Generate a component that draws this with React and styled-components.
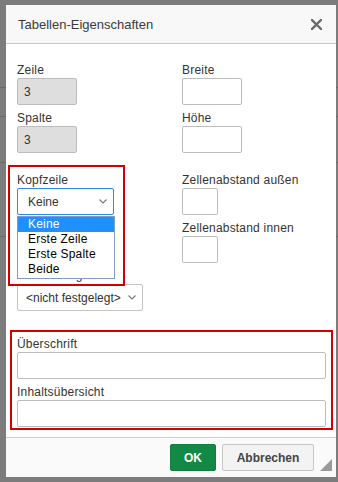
import React from 'react';
import styled, { createGlobalStyle } from 'styled-components';

const GlobalStyle = createGlobalStyle`
  html, body {
    margin: 0;
    padding: 0;
  }
  body {
    font-family: "Liberation Sans", Arial, sans-serif;
    background: #7c7c7c;
  }
  * {
    box-sizing: border-box;
  }
`;

const Chevron = () => (
  <svg width="8" height="5" viewBox="0 0 8 5">
    <polyline points="0.5,0.5 4,4 7.5,0.5" fill="none" stroke="#777" strokeWidth="1.1" />
  </svg>
);

const CloseIcon = () => (
  <svg width="11" height="11" viewBox="0 0 11 11">
    <path d="M1 1 L10 10 M10 1 L1 10" stroke="#6b6b6b" strokeWidth="2.4" strokeLinecap="square" />
  </svg>
);

const App = () => {
  return (
    <>
      <GlobalStyle />
      <Backdrop>
        <Dialog>
          <Header>
            <Title>Tabellen-Eigenschaften</Title>
            <CloseButton><CloseIcon /></CloseButton>
          </Header>

          <Body>
            <FieldGrid>
              <Field>
                <Label>Zeile</Label>
                <Input $w={60} $disabled>3</Input>
              </Field>
              <Field>
                <Label>Breite</Label>
                <Input $w={60} />
              </Field>
              <Field>
                <Label>Spalte</Label>
                <Input $w={60} $disabled>3</Input>
              </Field>
              <Field>
                <Label>Höhe</Label>
                <Input $w={60} />
              </Field>
            </FieldGrid>

            <FieldGrid $top={19}>
              <Field $open>
                <Label>Kopfzeile</Label>
                <Select $w={97} $focused>
                  <span>Keine</span>
                  <Chevron />
                </Select>
                <OptionList>
                  <Option $active>Keine</Option>
                  <Option>Erste Zeile</Option>
                  <Option>Erste Spalte</Option>
                  <Option>Beide</Option>
                </OptionList>
                <Marker />
              </Field>
              <Field>
                <Label>Zellenabstand außen</Label>
                <Input $w={36} />
              </Field>
              <Field />
              <Field>
                <Label>Zellenabstand innen</Label>
                <Input $w={36} />
              </Field>
              <Field>
                <Label $raise>Ausrichtung</Label>
                <Select $w={126}>
                  <span>&lt;nicht festgelegt&gt;</span>
                  <Chevron />
                </Select>
              </Field>
            </FieldGrid>

            <CaptionBox>
              <Field>
                <Label>Überschrift</Label>
                <Input />
              </Field>
              <Field>
                <Label>Inhaltsübersicht</Label>
                <Input />
              </Field>
            </CaptionBox>
          </Body>

          <Footer>
            <OkButton>OK</OkButton>
            <CancelButton>Abbrechen</CancelButton>
          </Footer>
          <ResizeGrip>
            <svg width="12" height="12" viewBox="0 0 12 12">
              <polygon points="12,0 12,12 0,12" fill="#9a9a9a" />
            </svg>
          </ResizeGrip>
        </Dialog>
      </Backdrop>
    </>
  );
};

const line = (y) => `linear-gradient(#6a6a6a, #6a6a6a) 0 ${y}px / 100% 1px no-repeat`;

const Backdrop = styled.div`
  width: 338px;
  height: 482px;
  padding: 5px 2px 5px 6px;
  background: ${line(87)}, ${line(116)}, ${line(162)}, ${line(236)}, #7c7c7c;
`;

const Dialog = styled.div`
  position: relative;
  width: 330px;
  height: 472px;
  background: #fff;
  display: flex;
  flex-direction: column;
`;

const Header = styled.div`
  flex: none;
  height: 39px;
  display: flex;
  align-items: center;
  justify-content: space-between;
  padding: 0 14px 0 12px;
  background: #f8f8f8;
  border-bottom: 1px solid #c9c9c9;
`;

const Title = styled.div`
  font-size: 13px;
  color: #3a3a3a;
`;

const CloseButton = styled.div`
  display: flex;
  width: 11px;
  height: 11px;
  margin-top: 1px;
`;

const Body = styled.div`
  flex: 1;
  padding: 18px 10px 7px 11px;
`;

const FieldGrid = styled.div`
  display: grid;
  grid-template-columns: 165px 1fr;
  row-gap: 5px;
  margin-top: ${(p) => p.$top || 0}px;
`;

const Field = styled.div`
  position: relative;
  display: flex;
  flex-direction: column;
  align-items: flex-start;
  z-index: ${(p) => (p.$open ? 2 : 'auto')};
`;

const Label = styled.div`
  font-size: 12px;
  line-height: ${(p) => (p.$raise ? 14 : 16)}px;
  margin-bottom: ${(p) => (p.$raise ? 2 : 0)}px;
  letter-spacing: 0.2px;
  color: #333;
`;

const Input = styled.div`
  width: ${(p) => (p.$w ? `${p.$w}px` : '100%')};
  height: 27px;
  padding: 0 6px;
  display: flex;
  align-items: center;
  font-size: 12px;
  color: #333;
  border: 1px solid #bcbcbc;
  border-radius: 2px;
  background: ${(p) => (p.$disabled ? '#dedede' : '#fff')};
`;

const Select = styled.div`
  width: ${(p) => p.$w}px;
  height: 27px;
  padding: 0 6px 0 ${(p) => (p.$focused ? 10 : 8)}px;
  display: flex;
  align-items: center;
  justify-content: space-between;
  font-size: 12px;
  color: #333;
  border: 1px solid ${(p) => (p.$focused ? '#2a8ce8' : '#c4c4c4')};
  border-radius: 2px;
  background: #fff;
`;

const OptionList = styled.div`
  position: absolute;
  left: 0;
  top: calc(100% + 1px);
  width: 98px;
  border: 1px solid #7f9cc9;
  padding-bottom: 1px;
  background: #fff;
`;

const Option = styled.div`
  height: 15px;
  line-height: 15px;
  padding-left: 10px;
  font-size: 12px;
  letter-spacing: 0.2px;
  color: ${(p) => (p.$active ? '#fff' : '#000')};
  background: ${(p) => (p.$active ? '#1e90ff' : 'transparent')};
`;

const Marker = styled.div`
  position: absolute;
  left: -9px;
  top: -7px;
  width: 117px;
  height: 121px;
  border: 2px solid #d40000;
  pointer-events: none;
`;

const CaptionBox = styled.div`
  display: flex;
  flex-direction: column;
  gap: 5px;
  margin: 19px -7px 0;
  padding: 4px 5px 1px;
  border: 2px solid #d40000;
`;

const Footer = styled.div`
  flex: none;
  display: flex;
  justify-content: flex-end;
  gap: 6px;
  padding: 6px 22px;
  border-top: 1px solid #cfcfcf;
  background: #fafafa;
`;

const BaseButton = styled.div`
  height: 27px;
  display: flex;
  align-items: center;
  justify-content: center;
  font-size: 12px;
  font-weight: bold;
  border-radius: 2px;
`;

const OkButton = styled(BaseButton)`
  width: 46px;
  color: #fff;
  background: #128a45;
  border: 1px solid #0f7e3e;
`;

const CancelButton = styled(BaseButton)`
  width: 92px;
  color: #444;
  background: #f3f3f3;
  border: 1px solid #c6c6c6;
`;

const ResizeGrip = styled.div`
  position: absolute;
  right: 4px;
  bottom: 6px;
  display: flex;
`;

export default App;
